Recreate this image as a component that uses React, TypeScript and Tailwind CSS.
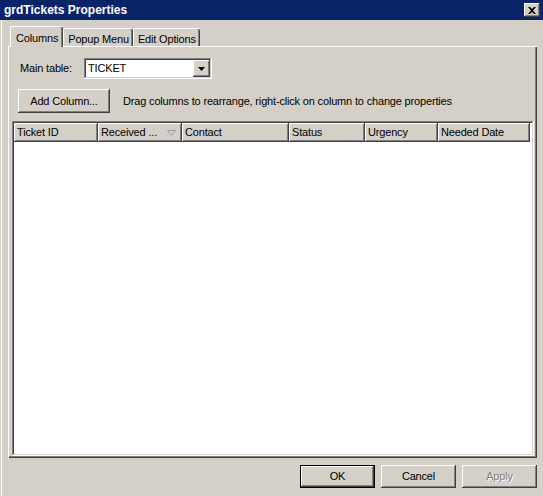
import React from 'react';

const raised =
  'shadow-[inset_-1px_-1px_#404040,inset_1px_1px_#ffffff,inset_-2px_-2px_#808080,inset_2px_2px_#d4d0c8]';
const sunken =
  'shadow-[inset_-1px_-1px_#ffffff,inset_1px_1px_#808080,inset_-2px_-2px_#d4d0c8,inset_2px_2px_#404040]';

const columns = [
  { name: 'Ticket ID', w: 'w-[84px]' },
  { name: 'Received ...', w: 'w-[84px]', sort: true },
  { name: 'Contact', w: 'w-[107px]' },
  { name: 'Status', w: 'w-[76px]' },
  { name: 'Urgency', w: 'w-[73px]' },
  { name: 'Needed Date', w: 'w-[92px]' },
];

const Tab = ({ label, active }: { label: string; active?: boolean }) =>
  active ? (
    <div className="relative z-10 h-[21px] px-[5px] pt-[3px] bg-[#d4d0c8] border-l border-t border-white rounded-tl-[2px] rounded-tr-[2px] shadow-[inset_-1px_0_#404040,inset_-2px_0_#808080]">
      {label}
    </div>
  ) : (
    <div className="h-[18px] mb-[1px] px-[4px] pt-[2px] border-l border-t border-white rounded-tl-[2px] rounded-tr-[2px] shadow-[inset_-1px_0_#404040,inset_-2px_0_#808080]">
      {label}
    </div>
  );

const Button = ({
  label,
  w,
  def,
  disabled,
}: {
  label: string;
  w: string;
  def?: boolean;
  disabled?: boolean;
}) => (
  <div
    className={`${w} h-[23px] flex items-center justify-center ${
      def ? 'border border-black' : ''
    }`}
  >
    <div
      className={`w-full h-full flex items-center justify-center ${raised} ${
        disabled ? 'text-[#808080] [text-shadow:1px_1px_#ffffff]' : ''
      }`}
    >
      {label}
    </div>
  </div>
);

export default function App() {
  return (
    <div
      className="w-[543px] h-[496px] bg-[#d4d0c8] flex flex-col text-[11px] tracking-[-0.17px] text-black overflow-hidden shadow-[inset_1px_0_#d4d0c8,inset_2px_0_#ffffff]"
      style={{ fontFamily: '"Liberation Sans", Arial, sans-serif' }}
    >
      {/* title bar */}
      <div className="h-[20px] bg-[#0a246a] flex items-center pl-[4px] pr-[3px]">
        <span className="text-white font-bold text-[12px] tracking-normal flex-1">grdTickets Properties</span>
        <div className={`w-[16px] h-[14px] bg-[#d4d0c8] flex items-center justify-center ${raised}`}>
          <svg width="8" height="7" viewBox="0 0 8 7">
            <path d="M0 0h2l2 2 2-2h2L5 3.5 8 7H6L4 5 2 7H0l3-3.5z" fill="#000" />
          </svg>
        </div>
      </div>

      {/* tabs */}
      <div className="flex items-end h-[27px] pl-[10px] -mb-[1px]">
        <Tab label="Columns" active />
        <Tab label="Popup Menu" />
        <Tab label="Edit Options" />
      </div>

      {/* panel */}
      <div className="mx-[8px] w-[529px] h-[412px] flex flex-col px-[3px] pt-[11px] pb-[2px] border-l border-t border-white shadow-[inset_-1px_-1px_#404040,inset_-2px_-2px_#808080]">
        <div className="flex items-center h-[21px]">
          <span className="ml-[8px] w-[64px]">Main table:</span>
          <div className={`w-[128px] h-[21px] bg-white flex items-center p-[2px] ${sunken}`}>
            <span className="flex-1 pl-[2px]">TICKET</span>
            <div className={`w-[17px] h-[17px] bg-[#d4d0c8] flex items-center justify-center ${raised}`}>
              <svg width="7" height="4" viewBox="0 0 7 4">
                <path d="M0 0h7L3.5 4z" fill="#000" />
              </svg>
            </div>
          </div>
        </div>

        <div className="flex items-center mt-[10px] h-[24px]">
          <div className={`ml-[6px] w-[92px] h-[24px] flex items-center justify-center ${raised}`}>
            Add Column...
          </div>
          <span className="ml-[13px]">
            Drag columns to rearrange, right-click on column to change properties
          </span>
        </div>

        <div className={`mt-[8px] flex-1 bg-white p-[2px] ${sunken}`}>
          <div className="flex h-[19px]">
            {columns.map((c) => (
              <div
                key={c.name}
                className={`${c.w} h-[19px] bg-[#d4d0c8] flex items-center pl-[3px] pr-[6px] ${raised}`}
              >
                <span className="flex-1 whitespace-nowrap overflow-hidden">{c.name}</span>
                {c.sort && (
                  <svg width="9" height="6" viewBox="0 0 9 6">
                    <path d="M0.5 0.5h8L4.5 5.5z" fill="none" stroke="#a0a0a0" strokeWidth="1" />
                  </svg>
                )}
              </div>
            ))}
          </div>
        </div>
      </div>

      {/* buttons */}
      <div className="flex justify-end gap-[6px] pr-[6px] mt-[7px]">
        <Button label="OK" w="w-[75px]" def />
        <Button label="Cancel" w="w-[75px]" />
        <Button label="Apply" w="w-[75px]" disabled />
      </div>
    </div>
  );
}
